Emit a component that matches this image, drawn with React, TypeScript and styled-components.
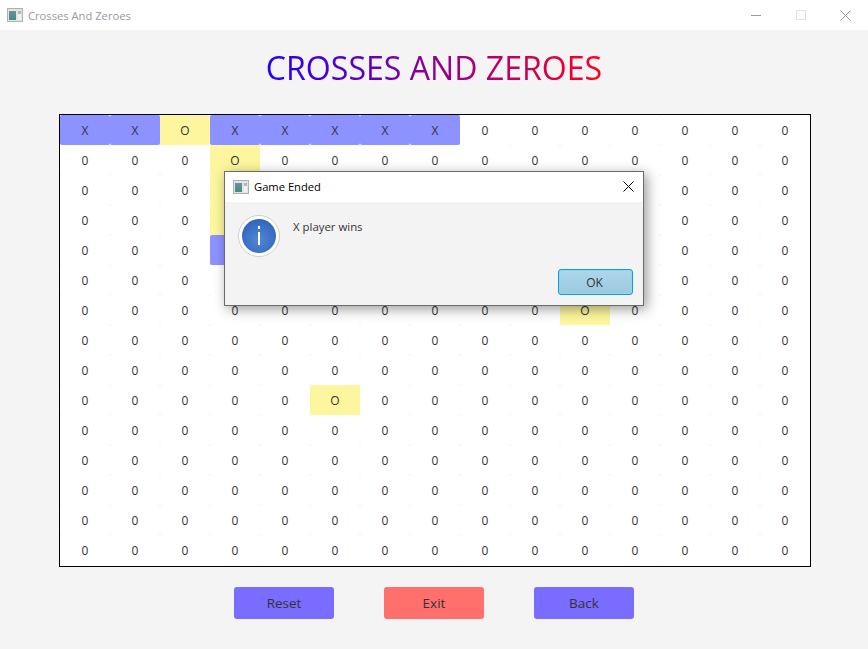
import { createGlobalStyle, styled } from "styled-components";

const COLS = 15;
const ROWS = 15;

type Mark = "X" | "O";

// cells that have been played, keyed "row,col"
const played: Record<string, Mark> = {
  "0,0": "X",
  "0,1": "X",
  "0,2": "O",
  "0,3": "X",
  "0,4": "X",
  "0,5": "X",
  "0,6": "X",
  "0,7": "X",
  "1,3": "O",
  "2,3": "O",
  "3,3": "O",
  "4,3": "X",
  "6,10": "O",
  "9,5": "O",
};

const GlobalStyle = createGlobalStyle`
  html, body {
    margin: 0;
    padding: 0;
    background: #f4f4f4;
    font-family: "Open Sans", "Noto Sans", sans-serif;
  }
`;

const Page = styled.div`
  position: relative;
  width: 868px;
  height: 649px;
  overflow: hidden;
  display: flex;
  flex-direction: column;
  background: #f4f4f4;
`;

const TitleBar = styled.div`
  height: 30px;
  flex: none;
  display: flex;
  align-items: center;
  padding-left: 7px;
  background: #fff;
`;

const AppTitle = styled.span`
  margin-left: 5px;
  font-size: 11.2px;
  color: #99999f;
`;

const Controls = styled.div`
  margin-left: auto;
  display: flex;
  align-items: center;
`;

const ControlButton = styled.div`
  width: 45px;
  height: 30px;
  display: flex;
  align-items: center;
  justify-content: center;
`;

const Main = styled.main`
  flex: 1;
  display: flex;
  flex-direction: column;
  align-items: center;
`;

const Heading = styled.h1`
  margin: 15px 0 0;
  height: 39px;
  line-height: 46px;
  font-size: 32.1px;
  font-weight: 400;
  white-space: nowrap;
  background: linear-gradient(to right, #2000ff, #ff0020);
  -webkit-background-clip: text;
  background-clip: text;
  color: transparent;
`;

const Board = styled.div`
  margin: 30px 0 0 2px;
  display: grid;
  grid-template-columns: repeat(${COLS}, 50px);
  grid-template-rows: repeat(${ROWS - 1}, 30px) 31px;
  border: 1px solid #000;
  background: #f4f4f4;
`;

const Cell = styled.div<{ $mark?: Mark }>`
  display: flex;
  align-items: center;
  justify-content: center;
  border-radius: 2px;
  font-size: 12px;
  color: #333;
  background: ${({ $mark }) =>
    $mark === "X" ? "#8c92ff" : $mark === "O" ? "#fdf69e" : "#fff"};
`;

const Actions = styled.div`
  margin-top: 20px;
  display: flex;
  gap: 50px;
`;

const ActionButton = styled.button<{ $danger?: boolean }>`
  width: 100px;
  height: 32px;
  padding: 0;
  border: none;
  border-radius: 3px;
  font-family: inherit;
  font-size: 13.5px;
  color: #333;
  background: ${({ $danger }) => ($danger ? "#ff6f6b" : "#7a6cff")};
`;

const Dialog = styled.div`
  position: absolute;
  left: 224px;
  top: 171px;
  width: 418px;
  height: 133px;
  display: flex;
  flex-direction: column;
  border: 1px solid #6b6b6b;
  background: #f3f3f3;
  box-shadow: 3px 3px 12px rgba(0, 0, 0, 0.4);
`;

const DialogHeader = styled.div`
  height: 30px;
  flex: none;
  display: flex;
  align-items: center;
  padding: 0 9px 1px 8px;
  box-sizing: border-box;
  background: #fff;
`;

const DialogTitle = styled.span`
  margin-left: 5px;
  font-size: 11.2px;
  color: #000;
`;

const DialogClose = styled.div`
  margin-left: auto;
  display: flex;
`;

const DialogBody = styled.div`
  flex: 1;
  display: flex;
  padding: 13px 0 0 13px;
`;

const Message = styled.span`
  margin-left: 13px;
  padding-top: 4px;
  font-size: 11.4px;
  line-height: 16px;
  color: #333;
`;

const DialogFooter = styled.div`
  display: flex;
  justify-content: flex-end;
  padding: 0 10px 10px 0;
`;

const OkButton = styled.button`
  width: 75px;
  height: 26px;
  padding: 0 2px 0 0;
  border: 1px solid #00a4e0;
  border-radius: 3px;
  box-shadow: inset 0 0 0 1px #9fd0e4;
  font-family: inherit;
  font-size: 12px;
  color: #333;
  background: linear-gradient(to bottom, #acd6ea, #9cc8e0);
`;

function WindowIcon() {
  return (
    <svg width="16" height="14" viewBox="0 0 16 14">
      <defs>
        <linearGradient id="pane" x1="0" y1="0" x2="0" y2="1">
          <stop offset="0" stopColor="#6d8ea6" />
          <stop offset="1" stopColor="#3f8f7c" />
        </linearGradient>
      </defs>
      <rect x="0.5" y="0.5" width="15" height="13" fill="#e4e4e4" stroke="#b0b0b0" />
      <rect x="2" y="3" width="7" height="9" fill="url(#pane)" />
      <rect x="9" y="3" width="2" height="9" fill="#dfe6e6" />
      <rect x="11" y="3" width="3" height="3" fill="#a9babd" />
      <rect x="11" y="6" width="3" height="6" fill="#f2f2f2" />
    </svg>
  );
}

function InfoIcon() {
  return (
    <svg width="42" height="42" viewBox="0 0 42 42">
      <defs>
        <radialGradient id="disc" cx="0.5" cy="0.6" r="0.6">
          <stop offset="0" stopColor="#5288d8" />
          <stop offset="1" stopColor="#2f66bd" />
        </radialGradient>
      </defs>
      <circle cx="21" cy="21" r="20.5" fill="#fff" stroke="#cfcfcf" />
      <circle cx="21" cy="21" r="17" fill="url(#disc)" />
      <rect x="20" y="17" width="2" height="13" fill="#fff" />
      <rect x="20" y="11" width="2" height="3" fill="#fff" />
    </svg>
  );
}

function CloseGlyph({ color, size }: { color: string; size: number }) {
  return (
    <svg width={size} height={size} viewBox={`0 0 ${size} ${size}`}>
      <path d={`M0.5 0.5L${size - 0.5} ${size - 0.5}M${size - 0.5} 0.5L0.5 ${size - 0.5}`} stroke={color} fill="none" />
    </svg>
  );
}

export default function App() {
  const cells = [];
  for (let r = 0; r < ROWS; r++) {
    for (let c = 0; c < COLS; c++) {
      const mark = played[`${r},${c}`];
      cells.push(
        <Cell key={`${r}-${c}`} $mark={mark}>
          {mark ?? "0"}
        </Cell>
      );
    }
  }

  return (
    <>
      <GlobalStyle />
      <Page>
        <TitleBar>
          <WindowIcon />
          <AppTitle>Crosses And Zeroes</AppTitle>
          <Controls>
            <ControlButton>
              <svg width="10" height="1" viewBox="0 0 10 1">
                <rect width="10" height="1" fill="#9a9a9a" />
              </svg>
            </ControlButton>
            <ControlButton>
              <svg width="10" height="10" viewBox="0 0 10 10">
                <rect x="0.5" y="0.5" width="9" height="9" fill="none" stroke="#e2e2e2" />
              </svg>
            </ControlButton>
            <ControlButton>
              <CloseGlyph color="#9a9a9a" size={11} />
            </ControlButton>
          </Controls>
        </TitleBar>
        <Main>
          <Heading>CROSSES AND ZEROES</Heading>
          <Board>{cells}</Board>
          <Actions>
            <ActionButton>Reset</ActionButton>
            <ActionButton $danger>Exit</ActionButton>
            <ActionButton>Back</ActionButton>
          </Actions>
        </Main>
        <Dialog>
          <DialogHeader>
            <WindowIcon />
            <DialogTitle>Game Ended</DialogTitle>
            <DialogClose>
              <CloseGlyph color="#000" size={11} />
            </DialogClose>
          </DialogHeader>
          <DialogBody>
            <InfoIcon />
            <Message>X player wins</Message>
          </DialogBody>
          <DialogFooter>
            <OkButton>OK</OkButton>
          </DialogFooter>
        </Dialog>
      </Page>
    </>
  );
}
